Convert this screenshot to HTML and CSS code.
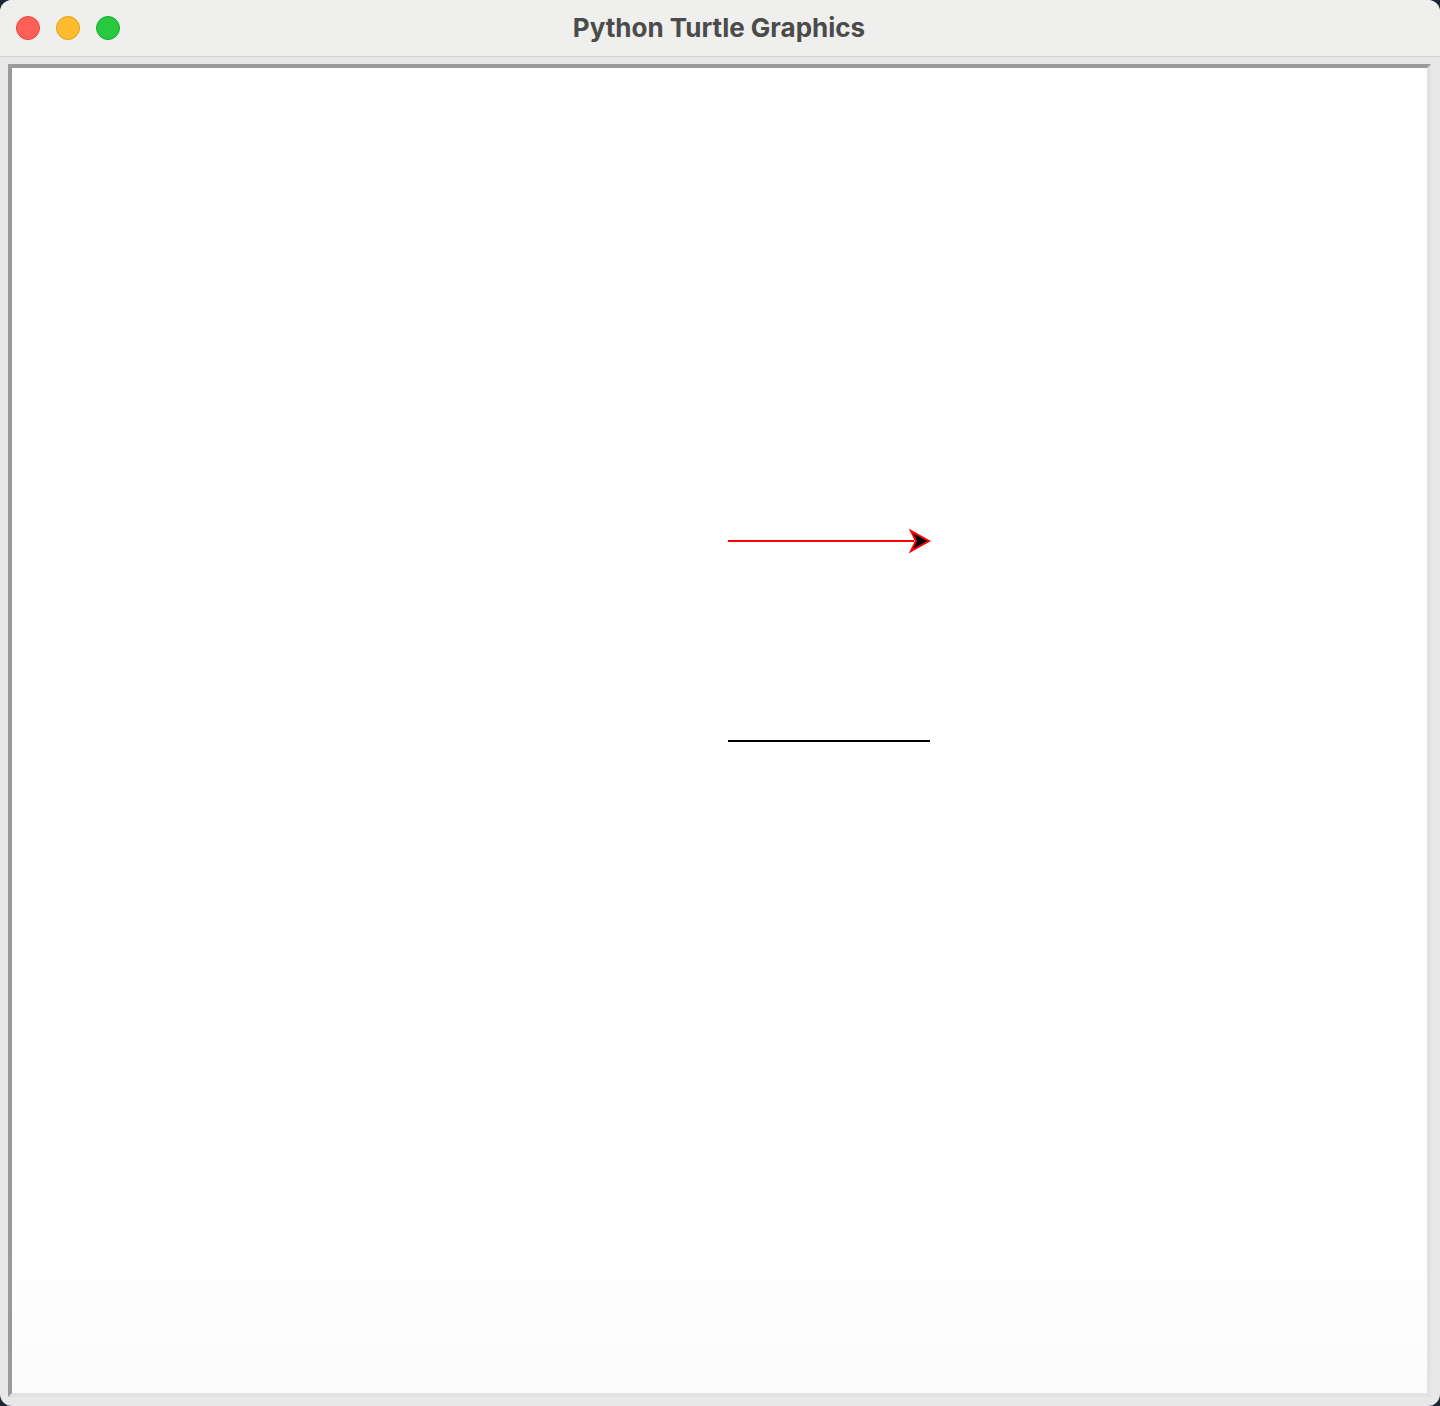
FILE: index.html
```html
<!DOCTYPE html>
<html lang="en">
<head>
<meta charset="utf-8">
<title>Python Turtle Graphics</title>
<link rel="stylesheet" href="styles.css">
</head>
<body>
<div class="window">
  <header class="titlebar">
    <div class="lights">
      <span class="light close"></span>
      <span class="light min"></span>
      <span class="light max"></span>
    </div>
    <h1 class="title">Python Turtle Graphics</h1>
  </header>
  <main class="body">
    <div class="frame">
      <svg class="canvas" viewBox="0 0 1415 1325" width="1415" height="1325" xmlns="http://www.w3.org/2000/svg">
        <defs>
          <linearGradient id="fade" x1="0" y1="0" x2="0" y2="1">
            <stop offset="0.88" stop-color="#ffffff"/>
            <stop offset="1" stop-color="#fbfbfb"/>
          </linearGradient>
        </defs>
        <rect width="1415" height="1325" fill="url(#fade)"/>
        <line x1="716" y1="473" x2="902" y2="473" stroke="#ff0000" stroke-width="2"/>
        <polygon points="917,473 899,463 904,473 899,483" fill="#000" stroke="#ff0000" stroke-width="2" stroke-linejoin="miter"/>
        <line x1="716" y1="673" x2="918" y2="673" stroke="#000" stroke-width="2"/>
      </svg>
    </div>
  </main>
</div>
</body>
</html>
```
FILE: styles.css
```css
html, body {
  margin: 0;
  padding: 0;
  background: #1f2633;
}
body {
  width: 1440px;
  height: 1406px;
  overflow: hidden;
}
.window {
  width: 1440px;
  height: 1406px;
  box-sizing: border-box;
  background: #e8e8e8;
  border-radius: 12px;
  overflow: hidden;
  display: flex;
  flex-direction: column;
}
.titlebar {
  height: 56px;
  flex: none;
  background: #efefed;
  border-bottom: 1px solid #d2d2d2;
  position: relative;
  display: flex;
  align-items: center;
  justify-content: center;
}
.lights {
  position: absolute;
  left: 16px;
  top: 16px;
  display: flex;
  gap: 16px;
}
.light {
  width: 24px;
  height: 24px;
  border-radius: 50%;
  box-sizing: border-box;
  display: block;
}
.close { background: #ff5f57; border: 1px solid #e2463f; }
.min { background: #febc2e; border: 1px solid #e1a116; }
.max { background: #28c840; border: 1px solid #14ae2a; }
.title {
  margin: 0;
  font-family: Inter, "Liberation Sans", sans-serif;
  font-weight: 700;
  font-size: 26px;
  color: #4b4b4b;
  letter-spacing: 0;
  margin-left: -2px;
  margin-top: -2px;
}
.body {
  flex: 1;
  padding: 7px 9px 9px 8px;
  display: flex;
}
.frame {
  border-style: solid;
  border-width: 4px;
  border-color: #9a9a9a #e2e2e2 #e2e2e2 #9a9a9a;
  width: 1415px;
  height: 1325px;
  background: #fff;
}
.canvas {
  display: block;
}
```
